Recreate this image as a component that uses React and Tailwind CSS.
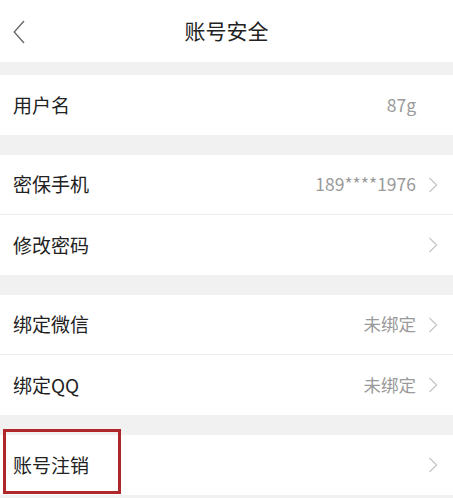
import React from "react";

const groups = [
  [{ label: "用户名", value: "87g", arrow: false }],
  [
    { label: "密保手机", value: "189****1976", arrow: true },
    { label: "修改密码", value: "", arrow: true },
  ],
  [
    { label: "绑定微信", value: "未绑定", arrow: true },
    { label: "绑定QQ", value: "未绑定", arrow: true },
  ],
  [{ label: "账号注销", value: "", arrow: true, marked: true }],
];

const Chevron = ({ className }) => (
  <svg viewBox="0 0 10 16" className={className} fill="none" stroke="currentColor" strokeWidth="1.2">
    <path d="M1.5 1 L8.5 8 L1.5 15" />
  </svg>
);

const Row = ({ item, last }) => (
  <div className={`relative h-[60px] flex items-center px-[13px] bg-white ${last ? "" : "border-b border-[#ececec]"}`}>
    <span className="text-[19px] text-[#222]">{item.label}</span>
    <div className="ml-auto flex items-center">
      {item.value && <span className="text-[17.5px] text-[#9a9a9a]">{item.value}</span>}
      {item.arrow ? (
        <Chevron className="w-[10px] h-[16px] ml-[12px] mr-[2px] text-[#c4c4c4]" />
      ) : (
        <span className="w-[24px]" />
      )}
    </div>
    {item.marked && (
      <div className="absolute left-[3px] top-[-6px] w-[118px] h-[65px] border-[3px] border-[#b0272b]" />
    )}
  </div>
);

export default function App() {
  return (
    <div
      className="w-[453px] h-[498px] overflow-hidden bg-[#f1f1f1]"
      style={{ fontFamily: '"Noto Sans CJK SC", "Noto Sans", sans-serif' }}
    >
      <div className="h-[62px] bg-white flex items-center relative">
        <svg
          viewBox="0 0 12 24"
          className="absolute left-[13px] top-[20px] w-[12px] h-[24px] text-[#666]"
          fill="none"
          stroke="currentColor"
          strokeWidth="1.3"
        >
          <path d="M11 1 L1.2 12 L11 23" />
        </svg>
        <h1 className="flex-1 text-center text-[21px] text-[#222]">账号安全</h1>
      </div>
      <div className="flex flex-col">
        {groups.map((g, gi) => (
          <div key={gi} className={gi === 0 ? "mt-[13px]" : "mt-[20px]"}>
            {g.map((item, i) => (
              <Row key={item.label} item={item} last={i === g.length - 1} />
            ))}
          </div>
        ))}
      </div>
    </div>
  );
}
